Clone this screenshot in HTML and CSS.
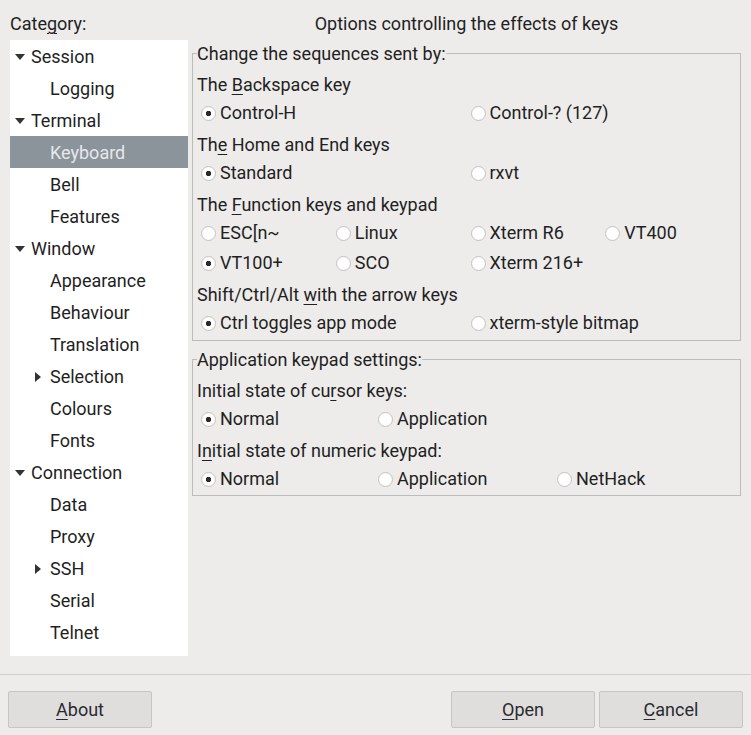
FILE: index.html
```html
<!DOCTYPE html>
<html lang="en">
<head>
    <meta charset="UTF-8">
    <title>PuTTY Configuration</title>
    <link rel="stylesheet" href="styles.css">
</head>
<body>
    <div class="window">
        <div class="main">
            <div class="side">
                <div class="caption">Cate<u>g</u>ory:</div>
                <div class="tree">
                    <div class="node"><span class="arrow down"></span>Session</div>
                    <div class="node sub">Logging</div>
                    <div class="node"><span class="arrow down"></span>Terminal</div>
                    <div class="node sub selected">Keyboard</div>
                    <div class="node sub">Bell</div>
                    <div class="node sub">Features</div>
                    <div class="node"><span class="arrow down"></span>Window</div>
                    <div class="node sub">Appearance</div>
                    <div class="node sub">Behaviour</div>
                    <div class="node sub">Translation</div>
                    <div class="node subarrow"><span class="arrow right"></span>Selection</div>
                    <div class="node sub">Colours</div>
                    <div class="node sub">Fonts</div>
                    <div class="node"><span class="arrow down"></span>Connection</div>
                    <div class="node sub">Data</div>
                    <div class="node sub">Proxy</div>
                    <div class="node subarrow"><span class="arrow right"></span>SSH</div>
                    <div class="node sub">Serial</div>
                    <div class="node sub">Telnet</div>
                </div>
            </div>
            <div class="panel">
                <div class="title">Options controlling the effects of keys</div>

                <fieldset class="box">
                    <legend>Change the sequences sent by:</legend>
                    <div class="group">
                        <div class="label">The <u>B</u>ackspace key</div>
                        <div class="radios cols4">
                            <div class="radio span2 on">Control-H</div>
                            <div class="radio span2">Control-? (127)</div>
                        </div>
                    </div>
                    <div class="group">
                        <div class="label">Th<u>e</u> Home and End keys</div>
                        <div class="radios cols4">
                            <div class="radio span2 on">Standard</div>
                            <div class="radio span2">rxvt</div>
                        </div>
                    </div>
                    <div class="group">
                        <div class="label">The <u>F</u>unction keys and keypad</div>
                        <div class="radios cols4">
                            <div class="radio">ESC[n~</div>
                            <div class="radio">Linux</div>
                            <div class="radio">Xterm R6</div>
                            <div class="radio">VT400</div>
                            <div class="radio on">VT100+</div>
                            <div class="radio">SCO</div>
                            <div class="radio">Xterm 216+</div>
                        </div>
                    </div>
                    <div class="group">
                        <div class="label">Shift/Ctrl/Alt <u>w</u>ith the arrow keys</div>
                        <div class="radios cols4">
                            <div class="radio span2 on">Ctrl toggles app mode</div>
                            <div class="radio span2">xterm-style bitmap</div>
                        </div>
                    </div>
                </fieldset>

                <fieldset class="box">
                    <legend>Application keypad settings:</legend>
                    <div class="group">
                        <div class="label">Initial state of cu<u>r</u>sor keys:</div>
                        <div class="radios cols3">
                            <div class="radio on">Normal</div>
                            <div class="radio">Application</div>
                        </div>
                    </div>
                    <div class="group">
                        <div class="label">I<u>n</u>itial state of numeric keypad:</div>
                        <div class="radios cols3">
                            <div class="radio on">Normal</div>
                            <div class="radio">Application</div>
                            <div class="radio">NetHack</div>
                        </div>
                    </div>
                </fieldset>
            </div>
        </div>
        <div class="footer">
            <button class="btn"><u>A</u>bout</button>
            <div class="spacer"></div>
            <button class="btn"><u>O</u>pen</button>
            <button class="btn"><u>C</u>ancel</button>
        </div>
    </div>
</body>
</html>
```

FILE: styles.css
```css
html, body {
    margin: 0;
    padding: 0;
    background-color: #edecea;
}

body {
    font-family: Roboto, "Liberation Sans", sans-serif;
    font-size: 18px;
    color: #1f1f24;
}

u {
    text-decoration-thickness: 1px;
    text-underline-offset: 3px;
}

.window {
    width: 751px;
    height: 735px;
    display: flex;
    flex-direction: column;
}

.main {
    display: flex;
    gap: 4px;
    padding: 0 10px 0 10px;
    height: 656px;
}

/* category tree */
.side {
    width: 178px;
    display: flex;
    flex-direction: column;
}

.caption {
    height: 40px;
    line-height: 22px;
    padding-top: 13px;
    box-sizing: border-box;
}

.tree {
    flex: 1;
    background-color: #ffffff;
}

.node {
    height: 32px;
    line-height: 30px;
    padding-top: 2px;
    padding-left: 5px;
    box-sizing: border-box;
    display: flex;
    align-items: center;
}

.node.sub {
    padding-left: 40px;
}

.node.subarrow {
    padding-left: 25px;
}

.node.selected {
    background-color: #8b939b;
    color: #e6e8ea;
}

.arrow {
    width: 0;
    height: 0;
    flex: none;
}

.arrow.down {
    margin-right: 6px;
    border-left: 5.5px solid transparent;
    border-right: 5.5px solid transparent;
    border-top: 6px solid #333;
}

.arrow.right {
    margin-right: 9px;
    border-top: 5px solid transparent;
    border-bottom: 5px solid transparent;
    border-left: 6px solid #333;
}

/* options panel */
.panel {
    flex: 1;
    display: flex;
    flex-direction: column;
}

.title {
    height: 42px;
    line-height: 22px;
    padding-top: 13px;
    box-sizing: border-box;
    text-align: center;
}

.box {
    margin: 0 0 7px 0;
    padding: 0 4px 4px 4px;
    border: 1px solid #bcbcbc;
    min-width: 0;
}

.box + .box {
    padding-bottom: 3px;
}

.box legend {
    padding: 1px 0 0 0;
    line-height: 22px;
}

.group {
    margin-top: 4px;
}

.box legend + .group {
    margin-top: 5px;
}

.label {
    height: 28px;
    line-height: 26px;
    padding-top: 2px;
    box-sizing: border-box;
}

.radios {
    display: grid;
    row-gap: 2px;
}

.cols4 {
    grid-template-columns: repeat(4, 1fr);
}

.cols3 {
    grid-template-columns: 177px 179px 1fr;
}

.span2 {
    grid-column: span 2;
}

.radio {
    height: 28px;
    line-height: 26px;
    padding-top: 2px;
    box-sizing: border-box;
    display: flex;
    align-items: center;
    white-space: nowrap;
}

.radio:before {
    content: "";
    width: 13px;
    height: 13px;
    margin-left: 4px;
    margin-right: 4px;
    border: 1px solid #c4c4c4;
    border-radius: 50%;
    background: radial-gradient(circle, #ffffff 55%, #f2f2f2 100%);
    box-sizing: content-box;
    flex: none;
}

.radio.on:before {
    background: radial-gradient(circle, #2a2a2a 0, #2a2a2a 2.4px, #ffffff 3px, #ffffff 55%, #f2f2f2 100%);
}

/* bottom buttons */
.footer {
    margin-top: 18px;
    border-top: 1px solid #d0cfcd;
    display: flex;
    gap: 4px;
    padding: 16px 8px 0 8px;
}

.spacer {
    flex: 1;
}

.btn {
    width: 144px;
    height: 37px;
    font-family: inherit;
    font-size: 18px;
    color: #2a2a30;
    background-color: #dfdedd;
    border: 1px solid #c6c6c6;
    border-radius: 2px;
    padding: 0;
}
```
